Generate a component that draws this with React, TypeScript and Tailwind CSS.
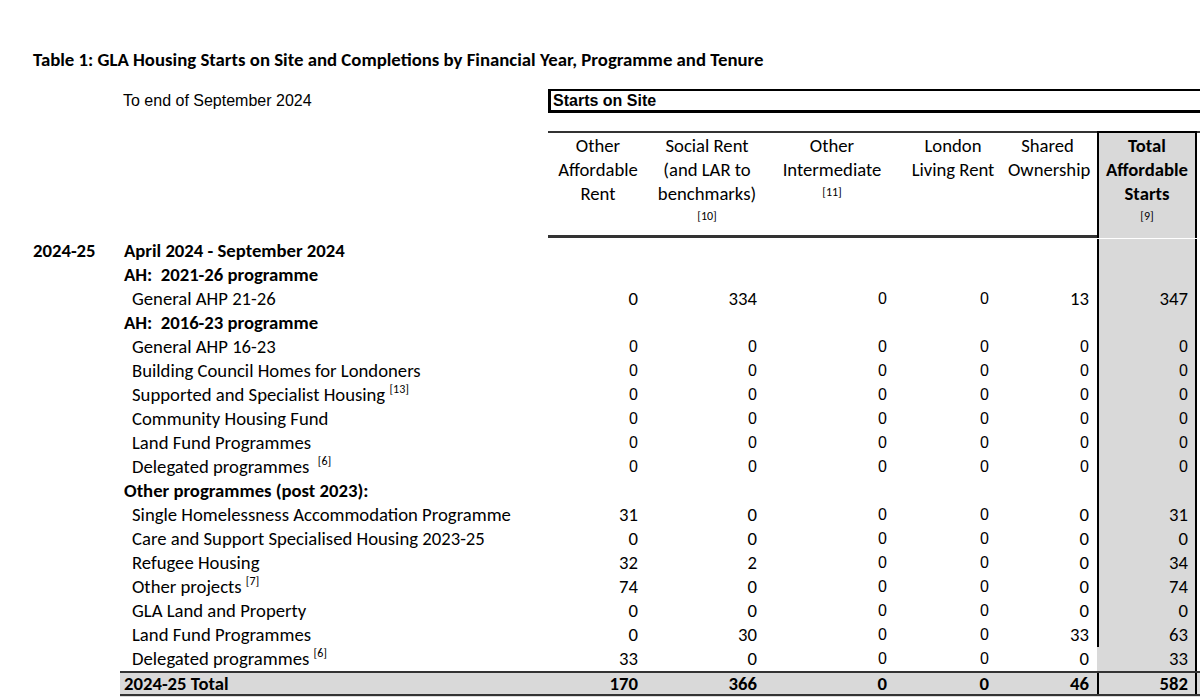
import React from 'react';

const cal = "font-['Carlito','Lato',sans-serif]";
const ari = "font-['Liberation_Sans','Arial',sans-serif]";

type Row = {
  year?: string;
  label: string;
  sup?: string;
  bold?: boolean;
  indent?: boolean;
  vals?: number[];
  arial?: boolean;
  noTotalLeft?: boolean;
};

const rows: Row[] = [
  { year: '2024-25', label: 'April 2024 - September 2024', bold: true },
  { label: 'AH:\u00a0 2021-26 programme', bold: true },
  { label: 'General AHP 21-26', indent: true, vals: [0, 334, 0, 0, 13, 347] },
  { label: 'AH:\u00a0 2016-23 programme', bold: true },
  { label: 'General AHP 16-23', indent: true, vals: [0, 0, 0, 0, 0, 0], arial: true },
  { label: 'Building Council Homes for Londoners', indent: true, vals: [0, 0, 0, 0, 0, 0], arial: true },
  { label: 'Supported and Specialist Housing ', sup: '[13]', indent: true, vals: [0, 0, 0, 0, 0, 0], arial: true },
  { label: 'Community Housing Fund', indent: true, vals: [0, 0, 0, 0, 0, 0], arial: true },
  { label: 'Land Fund Programmes', indent: true, vals: [0, 0, 0, 0, 0, 0], arial: true },
  { label: 'Delegated programmes \u00a0', sup: '[6]', indent: true, vals: [0, 0, 0, 0, 0, 0], arial: true },
  { label: 'Other programmes (post 2023):', bold: true },
  { label: 'Single Homelessness Accommodation Programme', indent: true, vals: [31, 0, 0, 0, 0, 31] },
  { label: 'Care and Support Specialised Housing 2023-25', indent: true, vals: [0, 0, 0, 0, 0, 0] },
  { label: 'Refugee Housing', indent: true, vals: [32, 2, 0, 0, 0, 34] },
  { label: 'Other projects ', sup: '[7]', indent: true, vals: [74, 0, 0, 0, 0, 74] },
  { label: 'GLA Land and Property', indent: true, vals: [0, 0, 0, 0, 0, 0] },
  { label: 'Land Fund Programmes', indent: true, vals: [0, 30, 0, 0, 33, 63] },
  { label: 'Delegated programmes ', sup: '[6]', indent: true, vals: [33, 0, 0, 0, 0, 33], noTotalLeft: true },
];

const grid = 'grid grid-cols-[548px_100px_118px_132px_110px_89px_100px_1fr]';
const pads = ['pr-[10px]', 'pr-[9px]', 'pr-[11px]', 'pr-[19px]', 'pr-[8px]'];

function Sup({ t }: { t: string }) {
  return <span className="relative -top-[8px] text-[12px] leading-none">{t}</span>;
}

function DataRow({ r }: { r: Row }) {
  return (
    <div className={`${grid} h-[24px] leading-[24px] text-[18.7px]`}>
      <div className="flex">
        <div className="w-[124px] pl-[33px] font-bold">{r.year}</div>
        <div className={`${r.bold ? 'font-bold' : ''} ${r.indent ? 'pl-[8px]' : ''} whitespace-pre`}>
          {r.label}
          {r.sup && <Sup t={r.sup} />}
        </div>
      </div>
      {pads.map((p, i) => (
        <div key={i} className={`text-right ${p} ${r.arial || i === 2 || i === 3 ? `${ari} text-[16px]` : ''}`}>
          {r.vals ? r.vals[i] : ''}
        </div>
      ))}
      <div
        className={`bg-[#d9d9d9] border-r-2 border-black text-right pr-[7px] ${
          r.noTotalLeft ? 'border-l-2 border-l-[#d9d9d9]' : 'border-l-2'
        } ${r.arial ? `${ari} text-[16px]` : ''}`}
      >
        {r.vals ? r.vals[5] : ''}
      </div>
      <div />
    </div>
  );
}

export default function App() {
  const heads = [
    ['Other', 'Affordable', 'Rent'],
    ['Social Rent', '(and LAR to', 'benchmarks)', '[10]'],
    ['Other', 'Intermediate', '[11]'],
    ['London', 'Living Rent'],
    ['Shared', 'Ownership'],
  ];
  const totals = [170, 366, 0, 0, 46];

  return (
    <div className={`w-[1200px] h-[697px] overflow-hidden bg-white text-black ${cal}`}>
      {/* Title */}
      <div className="pt-[48px] pl-[33px] h-[72px] leading-[24px] text-[18.8px] font-bold">
        Table 1: GLA Housing Starts on Site and Completions by Financial Year, Programme and Tenure
      </div>

      {/* Sub heading + Starts on Site box */}
      <div className="flex mt-[17px] h-[24px]">
        <div className={`w-[548px] pl-[123px] ${ari} text-[16px] leading-[24px]`}>To end of September 2024</div>
        <div className={`flex-1 border-t-2 border-b-[3px] border-l-[3px] border-black ${ari} text-[16px] font-bold leading-[19px] pl-[2px]`}>
          Starts on Site
        </div>
      </div>

      {/* Column headers */}
      <div className={`${grid} mt-[18px] h-[107px] text-[18.7px]`}>
        <div />
        {heads.map((h, i) => (
          <div
            key={i}
            className={`border-t-2 border-b-[3px] border-[#333] text-center pt-[1px] leading-[24px] ${i === 4 ? 'pr-[10px]' : ''}`}
          >
            {h.map((t, j) =>
              t.startsWith('[') ? (
                <div key={j} className="text-[12px] leading-[20px]">{t}</div>
              ) : (
                <div key={j}>{t}</div>
              )
            )}
          </div>
        ))}
        <div className="bg-[#d9d9d9] border-2 border-b-0 border-black text-center font-bold leading-[24px] pt-[1px]">
          <div>Total</div>
          <div>Affordable</div>
          <div>Starts</div>
          <div className="text-[12px] font-normal leading-[20px]">[9]</div>
        </div>
        <div className="border-t-2 border-[#333]" />
      </div>

      {/* Data rows */}
      <div className="pt-[1px]">
        {rows.map((r, i) => (
          <DataRow key={i} r={r} />
        ))}
      </div>

      {/* Total row */}
      <div className="ml-[120px] grid grid-cols-[428px_100px_118px_132px_110px_89px_100px_1fr] h-[28px] bg-[#d9d9d9] border-t-2 border-b-[5px] border-double border-t-[#333] border-b-[#333] text-[18.7px] font-bold leading-[21px]">
        <div className="pl-[4px]">2024-25 Total</div>
        {totals.map((v, i) => (
          <div key={i} className={`text-right ${pads[i]}`}>{v}</div>
        ))}
        <div className="border-x-2 border-black text-right pr-[7px]">582</div>
        <div />
      </div>
    </div>
  );
}
